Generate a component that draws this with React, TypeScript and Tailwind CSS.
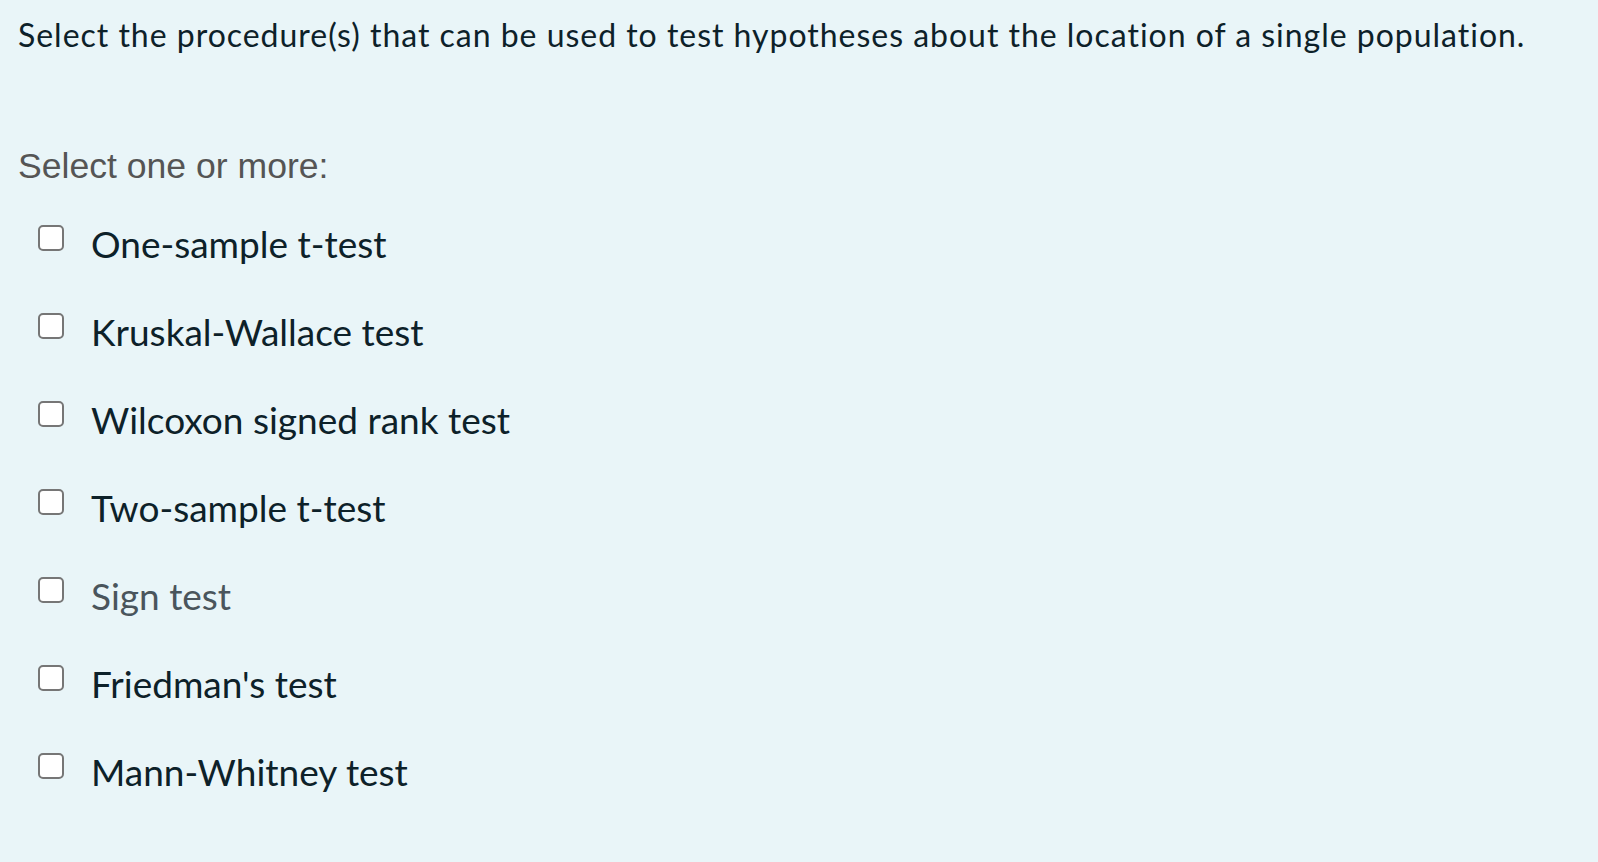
import React from "react";

const options = [
  "One-sample t-test",
  "Kruskal-Wallace test",
  "Wilcoxon signed rank test",
  "Two-sample t-test",
  "Sign test",
  "Friedman's test",
  "Mann-Whitney test",
];

export default function App() {
  return (
    <div className="min-h-screen w-full bg-[#e9f5f8] pl-[18px] pt-[15px]" style={{ minHeight: 862 }}>
      <p className="text-[32px] leading-[40px] tracking-[0.98px] text-[#0d2129] font-['Lato',sans-serif] whitespace-nowrap">
        Select the procedure(s) that can be used to test hypotheses about the location of a single population.
      </p>
      <p className="mt-[91px] text-[35.6px] leading-[40px] text-[#555555] font-['Liberation_Sans',Arial,sans-serif]">
        Select one or more:
      </p>
      <div className="mt-[38px] flex flex-col">
        {options.map((o, i) => (
          <label key={o} className="flex h-[88px] items-start pl-[20px]">
            <span className="mt-[1px] h-[26px] w-[26px] shrink-0 rounded-[5px] border-[2.5px] border-[#767676] bg-white" />
            <span
              className={
                "ml-[27px] text-[37px] leading-[40px] font-['Lato',sans-serif] " +
                (i === 4 ? "text-[#4a555c]" : "text-[#0d2129]")
              }
            >
              {o}
            </span>
          </label>
        ))}
      </div>
    </div>
  );
}
